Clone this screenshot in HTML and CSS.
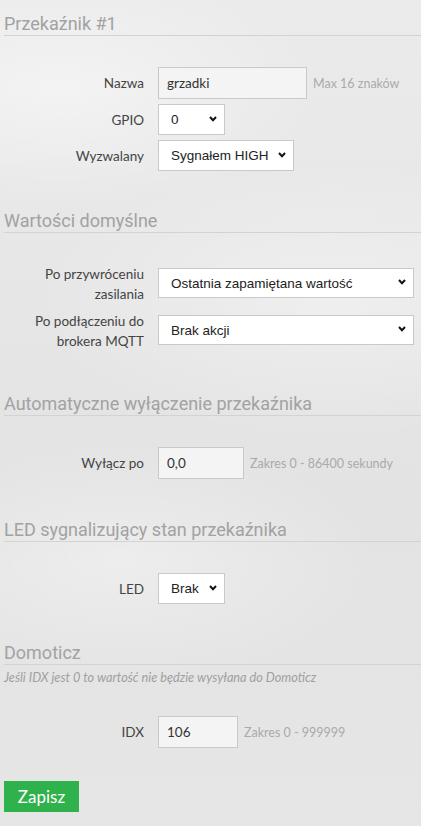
FILE: index.html
```html
<!DOCTYPE html>
<html>
<head>
  <meta charset="utf-8">
  <title>Przekaźnik #1</title>
  <meta name="viewport" content="width=device-width, initial-scale=1">
  <link rel="stylesheet" href="styles.css">
</head>
<body>
  <form class="page">
    <!-- Przekaznik -->
    <h3 class="first">Przekaźnik #1</h3>
    <div class="fields">
      <div class="row">
        <label>Nazwa</label>
        <input type="text" class="w-name" value="grzadki">
        <span class="hint">Max 16 znaków</span>
      </div>
      <div class="row">
        <label>GPIO</label>
        <span class="sel w-sm">
          <select><option>0</option></select>
          <svg class="chev" width="8" height="6" viewBox="0 0 8 6"><polyline points="1,1 4,4.2 7,1"/></svg>
        </span>
      </div>
      <div class="row">
        <label>Wyzwalany</label>
        <span class="sel w-md">
          <select><option>Sygnałem HIGH</option></select>
          <svg class="chev" width="8" height="6" viewBox="0 0 8 6"><polyline points="1,1 4,4.2 7,1"/></svg>
        </span>
      </div>
    </div>

    <!-- Wartosci domyslne -->
    <h3 class="defaults">Wartości domyślne</h3>
    <div class="fields">
      <div class="row tall">
        <label>Po przywróceniu zasilania</label>
        <span class="sel w-full">
          <select><option>Ostatnia zapamiętana wartość</option></select>
          <svg class="chev" width="8" height="6" viewBox="0 0 8 6"><polyline points="1,1 4,4.2 7,1"/></svg>
        </span>
      </div>
      <div class="row tall">
        <label>Po podłączeniu do brokera MQTT</label>
        <span class="sel w-full">
          <select><option>Brak akcji</option></select>
          <svg class="chev" width="8" height="6" viewBox="0 0 8 6"><polyline points="1,1 4,4.2 7,1"/></svg>
        </span>
      </div>
    </div>

    <!-- Automatyczne wylaczenie -->
    <h3 class="auto">Automatyczne wyłączenie przekaźnika</h3>
    <div class="fields">
      <div class="row">
        <label>Wyłącz po</label>
        <input type="text" class="w-time" value="0,0">
        <span class="hint">Zakres 0 - 86400 sekundy</span>
      </div>
    </div>

    <!-- LED -->
    <h3 class="led">LED sygnalizujący stan przekaźnika</h3>
    <div class="fields">
      <div class="row">
        <label>LED</label>
        <span class="sel w-sm">
          <select><option>Brak</option></select>
          <svg class="chev" width="8" height="6" viewBox="0 0 8 6"><polyline points="1,1 4,4.2 7,1"/></svg>
        </span>
      </div>
    </div>

    <!-- Domoticz -->
    <h3 class="domo">Domoticz</h3>
    <p class="note">Jeśli IDX jest 0 to wartość nie będzie wysyłana do Domoticz</p>
    <div class="fields idx">
      <div class="row">
        <label>IDX</label>
        <input type="text" class="w-idx" value="106">
        <span class="hint">Zakres 0 - 999999</span>
      </div>
    </div>

    <button type="button" class="save">Zapisz</button>
  </form>
</body>
</html>
```

FILE: styles.css
```css
body { margin: 0; font-family: Lato, "Noto Sans", sans-serif; color: #333;
       background: #e5e5e5;
       background-image:
         radial-gradient(ellipse 260px 120px at 60px 90px, rgba(255,255,255,0.45), rgba(255,255,255,0)),
         radial-gradient(ellipse 300px 140px at 330px 300px, rgba(255,255,255,0.35), rgba(255,255,255,0)),
         radial-gradient(ellipse 260px 120px at 120px 560px, rgba(255,255,255,0.35), rgba(255,255,255,0)),
         linear-gradient(#ebebeb, #e3e3e3 60%, #e6e6e6);
       min-height: 826px; }
.page { padding: 0 0 20px 4px; }

h3 { margin: 34px 0 0; font-family: Roboto, "Noto Sans", sans-serif; font-size: 18px; line-height: 22px;
     font-weight: normal; color: #a2a2a2; border-bottom: 1px solid #d3d3d3; }
h3.first { margin-top: 0; padding-top: 13px; }
h3.defaults { margin-top: 39px; }
h3.auto { margin-top: 42px; }
h3.led { margin-top: 40px; }
h3.domo { margin-top: 38px; }

.fields { margin-top: 31px; }
.fields.idx { margin-top: 31px; }
.row { display: flex; align-items: center; margin-bottom: 5px; }
.row label { width: 112px; margin-left: 28px; padding-right: 14px; text-align: right;
             font-size: 13.5px; line-height: 20px; color: #444; }
.row.tall { align-items: flex-start; margin-bottom: 7px; }
.row.tall .sel { margin-top: 4px; }

input[type=text] { box-sizing: border-box; height: 32px; padding: 0 8px; border: 1px solid #c9c9c9;
                   background: #f4f4f4; font-family: Lato, sans-serif; font-size: 13.5px; color: #333;
                   outline: none; }
.w-name { width: 149px; }
.w-time { width: 86px; }
.w-idx { width: 80px; }

.hint { margin-left: 6px; font-size: 12.5px; color: #aaa; }

.sel { position: relative; display: inline-block; height: 31px; }
.sel select { -webkit-appearance: none; appearance: none; box-sizing: border-box; width: 100%; height: 100%;
              padding: 0 20px 0 12px; border: 1px solid #c9c9c9; border-radius: 0; background: #fff;
              font-family: "Liberation Sans", Arial, sans-serif; font-size: 13.5px; color: #222; outline: none; }
.sel .chev { position: absolute; right: 8px; top: 12px; pointer-events: none; }
.chev polyline { fill: none; stroke: #111; stroke-width: 2; }
.w-sm { width: 67px; }
.w-md { width: 136px; }
.w-full { width: 256px; height: 30px; }
.row.tall .sel .chev { top: 11px; }

.note { margin: 4px 0 0; font-size: 12.7px; line-height: 16px; font-style: italic; color: #a0a0a0; }

.save { margin-top: 28px; width: 75px; height: 31px; border: none; background: #2fb14b; color: #fff;
        font-family: Lato, sans-serif; font-size: 17px; cursor: pointer; }
```
